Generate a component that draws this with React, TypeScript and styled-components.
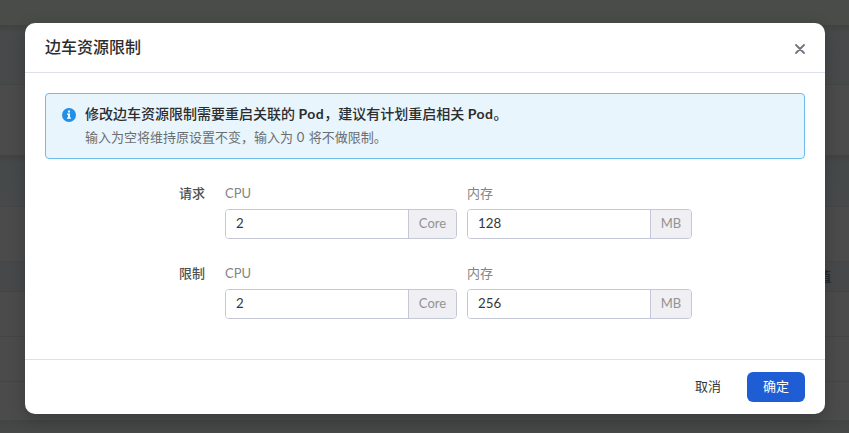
import React, { useState } from "react";
import styled, { createGlobalStyle } from "styled-components";

const GlobalStyle = createGlobalStyle`
  * { box-sizing: border-box; }
  body {
    margin: 0;
    overflow: hidden;
    font-family: Lato, "Noto Sans CJK SC", sans-serif;
    font-size: 13px;
    color: #363636;
  }
  button, input { font: inherit; }
`;

const Page = styled.div`
  position: relative;
  height: 433px;
  overflow: hidden;
  background: #464847;
`;

const Backdrop = styled.div`
  display: flex;
  flex-direction: column;
`;

const Band = styled.div<{ $height: number; $tone: string; $line?: string }>`
  height: ${(p) => p.$height}px;
  flex: none;
  display: flex;
  align-items: center;
  justify-content: flex-end;
  padding: 0 18px 3px 0;
  font-weight: 700;
  color: #282828;
  background: ${(p) => p.$tone};
  border-bottom: ${(p) => (p.$line ? `1px solid ${p.$line}` : "0")};
`;

const Overlay = styled.div`
  position: absolute;
  inset: 0;
  display: flex;
  align-items: flex-start;
  justify-content: center;
  padding: 23px 0 0 1px;
`;

const Dialog = styled.section`
  width: 800px;
  height: 391px;
  display: flex;
  flex-direction: column;
  background: #fff;
  border-radius: 10px;
  box-shadow: 0 5px 16px rgba(0, 0, 0, 0.22);
`;

const Header = styled.header`
  height: 50px;
  flex: none;
  display: flex;
  align-items: center;
  justify-content: space-between;
  padding: 0 20px;
  border-bottom: 1px solid #dfdfea;
`;

const Title = styled.h1`
  margin: 0 0 2px;
  font-size: 16px;
  line-height: 24px;
  font-weight: 500;
  color: #2d2d2d;
`;

const CloseButton = styled.button`
  display: flex;
  padding: 0;
  margin-top: 2px;
  border: 0;
  background: none;
  color: #6e757c;
`;

const Body = styled.div`
  flex: 1;
  padding: 20px;
`;

const Notice = styled.div`
  display: flex;
  gap: 9px;
  height: 66px;
  padding: 10px 16px;
  border: 1px solid #6cbcee;
  border-radius: 4px;
  background: #e8f5fc;
`;

const NoticeIcon = styled.svg`
  flex: none;
  margin-top: 4px;
`;

const NoticeTitle = styled.div`
  margin-top: -1px;
  font-size: 14px;
  line-height: 22px;
  font-weight: 500;
  color: #2d2d2d;
  b {
    font-weight: 700;
    letter-spacing: 0.45px;
  }
`;

const NoticeText = styled.div`
  line-height: 23px;
  padding-top: 1px;
  color: #6b6e70;
`;

const Digit = styled.span`
  letter-spacing: 0.5px;
`;

const Form = styled.div`
  display: grid;
  gap: 20px;
  padding-top: 24px;
`;

const FormRow = styled.div`
  display: grid;
  grid-template-columns: 160px auto auto;
  justify-content: start;
  height: 60px;
`;

const RowLabel = styled.div`
  text-align: right;
  line-height: 20px;
  font-weight: 500;
  color: #505050;
`;

const Field = styled.label`
  display: block;
  margin-left: 20px;
  & + & { margin-left: 10px; }
`;

const FieldName = styled.span`
  display: block;
  height: 26px;
  line-height: 20px;
  color: #858585;
`;

const InputGroup = styled.span`
  display: flex;
  height: 30px;
  border: 1px solid #c4c7d5;
  border-radius: 4px;
  overflow: hidden;
`;

const ValueInput = styled.input`
  width: 182px;
  padding: 0 10px 2px;
  border: 0;
  outline: 0;
  font-size: 13.3px;
  color: #363636;
`;

const Unit = styled.span<{ $width: number }>`
  width: ${(p) => p.$width}px;
  border-left: 1px solid #c4c7d5;
  background: #efeff4;
  color: #929395;
  text-align: center;
  line-height: 27px;
`;

const Footer = styled.footer`
  height: 55px;
  flex: none;
  display: flex;
  align-items: center;
  justify-content: flex-end;
  gap: 10px;
  padding: 0 20px;
  border-top: 1px solid #dfdfe6;
`;

const Button = styled.button<{ $primary?: boolean }>`
  height: 30px;
  width: 58px;
  padding: 0 0 2px;
  border: 0;
  border-radius: 6px;
  line-height: 26px;
  background: ${(p) => (p.$primary ? "#1f5dd5" : "transparent")};
  color: ${(p) => (p.$primary ? "#fff" : "#363636")};
`;

const units = [
  { name: "CPU", unit: "Core", unitWidth: 48 },
  { name: "内存", unit: "MB", unitWidth: 41 },
];

function ResourceRow({ label, initial }: { label: string; initial: string[] }) {
  const [values, setValues] = useState(initial);
  return (
    <FormRow>
      <RowLabel>{label}</RowLabel>
      {units.map((u, i) => (
        <Field key={u.name}>
          <FieldName>{u.name}</FieldName>
          <InputGroup>
            <ValueInput
              value={values[i]}
              onChange={(e) => setValues(values.map((v, j) => (j === i ? e.target.value : v)))}
            />
            <Unit $width={u.unitWidth}>{u.unit}</Unit>
          </InputGroup>
        </Field>
      ))}
    </FormRow>
  );
}

export default function App() {
  return (
    <Page>
      <GlobalStyle />
      <Backdrop aria-hidden>
        <Band $height={25} $tone="#4a4c4a" />
        <Band $height={60} $tone="linear-gradient(#414342, #47494a 8px, #47494b)" $line="#444645" />
        <Band $height={70} $tone="#4b4b4b" />
        <Band $height={52} $tone="linear-gradient(#414342, #46494a 8px, #47494b)" $line="#444648" />
        <Band $height={55} $tone="#4b4b4b" $line="#454648" />
        <Band $height={30} $tone="#46484a" $line="#434547">值</Band>
        <Band $height={45} $tone="#4b4b4b" $line="#454545" />
        <Band $height={45} $tone="#4b4b4b" $line="#454545" />
        <Band $height={38} $tone="#4b4b4b" />
        <Band $height={13} $tone="linear-gradient(#424544, #464948)" />
      </Backdrop>
      <Overlay>
        <Dialog role="dialog">
          <Header>
            <Title>边车资源限制</Title>
            <CloseButton aria-label="关闭">
              <svg width="10" height="10" viewBox="0 0 10 10" fill="none" stroke="currentColor" strokeWidth="1.8" strokeLinecap="round">
                <path d="M1 1L9 9M9 1L1 9" />
              </svg>
            </CloseButton>
          </Header>
          <Body>
            <Notice>
              <NoticeIcon width="14" height="14" viewBox="0 0 14 14">
                <circle cx="7" cy="7" r="7" fill="#2090e8" />
                <path d="M6 2.5h2v2H6zM5 5.5h3v4h1v1.3H5V9.5h1V6.8H5z" fill="#fff" />
              </NoticeIcon>
              <div>
                <NoticeTitle>
                  修改边车资源限制需要重启关联的 <b>Pod</b>，建议有计划重启相关 <b>Pod</b>。
                </NoticeTitle>
                <NoticeText>
                  输入为空将维持原设置不变，输入为<Digit> 0 </Digit>将不做限制。
                </NoticeText>
              </div>
            </Notice>
            <Form>
              <ResourceRow label="请求" initial={["2", "128"]} />
              <ResourceRow label="限制" initial={["2", "256"]} />
            </Form>
          </Body>
          <Footer>
            <Button>取消</Button>
            <Button $primary>确定</Button>
          </Footer>
        </Dialog>
      </Overlay>
    </Page>
  );
}
